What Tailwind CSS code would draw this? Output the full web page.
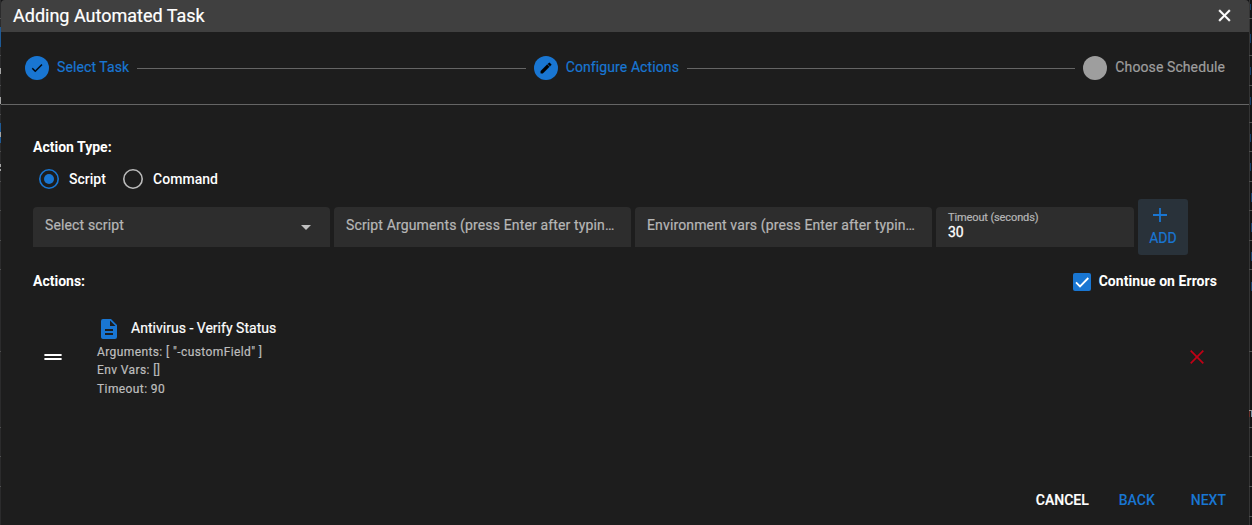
<!DOCTYPE html>
<html lang="en">
<head>
<meta charset="utf-8">
<title>Adding Automated Task</title>
<script src="https://cdn.jsdelivr.net/npm/@tailwindcss/browser@4"></script>
</head>
<body class="relative h-[525px] w-[1252px] overflow-hidden bg-[#141416] font-['Roboto',sans-serif] text-sm text-white">
<!-- page behind the dialog -->
<svg class="absolute inset-0" width="1252" height="525" viewBox="0 0 1252 525" shape-rendering="crispEdges">
<path fill="#2b2b2c" d="M0 0h1v525h-1z"/>
<path fill="#1e5a96" d="M0 27h1v20h-1zM0 123h1v9h-1zM0 137h1v6h-1z"/>
<path fill="#a5a5a5" d="M0 68h1v6h-1zM0 97h1v7h-1zM0 132h1v5h-1zM0 164h1v3h-1zM0 169h1v2h-1z"/>
<path fill="#505050" d="M0 18h1v1h-1zM0 55h1v1h-1zM0 85h1v1h-1zM0 114h1v1h-1zM0 151h1v1h-1zM0 181h1v1h-1zM0 210h1v1h-1zM0 240h1v1h-1zM0 269h1v1h-1zM0 351h1v1h-1zM0 427h1v1h-1zM0 456h1v1h-1zM0 486h1v1h-1z"/>
<path fill="#343434" d="M1249 0h1v525h-1z"/>
<path fill="#505050" d="M1249 18h3v1h-3zM1249 55h3v1h-3zM1249 85h3v1h-3zM1249 122h3v1h-3zM1249 151h3v1h-3zM1249 181h3v1h-3zM1249 210h3v1h-3zM1249 240h3v1h-3zM1249 269h3v1h-3zM1249 351h3v1h-3zM1249 427h3v1h-3zM1249 456h3v1h-3zM1249 486h3v1h-3zM1249 516h3v1h-3z"/>
<path fill="#16406c" d="M1250 4h1v6h-1zM1250 34h1v9h-1zM1250 67h1v8h-1zM1250 97h1v8h-1zM1250 134h1v8h-1zM1250 163h1v8h-1zM1251 193h1v9h-1zM1251 223h1v9h-1zM1251 252h1v9h-1zM1251 282h1v9h-1z"/>
<path fill="#999" d="M1249 410h3v1h-3z"/><path fill="#6b2f28" d="M1249 411h1v6h-1z"/><path fill="#7b93a4" d="M1251 411h1v6h-1z"/>
</svg>
<div class="relative ml-px flex h-full w-[1248px] flex-col rounded-t bg-[#1d1d1d]">
<header class="flex h-8 shrink-0 items-center justify-between rounded-t bg-[#404040] pl-3 pr-[17px] text-lg">
<h1 class="[-webkit-text-stroke:0.2px_#fff]">Adding Automated Task</h1>
<svg class="-mt-px" width="15" height="15" viewBox="5 5 14 14" fill="#fff" stroke="#fff" stroke-width=".3"><path d="M17.5 7.7 16.3 6.5 12 10.8 7.7 6.5 6.5 7.7 10.8 12 6.5 16.3 7.7 17.5 12 13.2 16.3 17.5 17.5 16.3 13.2 12z"/></svg>
</header>
<nav class="flex h-[73px] shrink-0 items-center gap-2 border-b border-[#656565] pl-6 pr-6 text-[#1976d2]">
<div class="flex items-center gap-2"><span class="flex size-6 items-center justify-center rounded-full bg-[#1976d2]"><svg width="14" height="14" viewBox="0 0 24 24" fill="#000" stroke="#000" stroke-width=".6"><path d="M9 16.17 4.83 12l-1.42 1.41L9 19 21 7l-1.41-1.41z"/></svg></span><span class="-mt-0.5 tracking-[0.1px] [-webkit-text-stroke:0.2px_currentColor]">Select Task</span></div>
<i class="h-px flex-1 bg-[#656565]"></i>
<div class="flex items-center gap-2"><span class="flex size-6 items-center justify-center rounded-full bg-[#1976d2]"><svg width="14" height="14" viewBox="0 0 24 24" fill="#000" stroke="#000" stroke-width=".6"><path d="M3 17.25V21h3.75L17.81 9.94l-3.75-3.75zM20.71 7.04a1 1 0 0 0 0-1.41l-2.34-2.34a1 1 0 0 0-1.41 0l-1.83 1.83 3.75 3.75z"/></svg></span><span class="-mt-0.5 tracking-[0.1px] [-webkit-text-stroke:0.2px_currentColor]">Configure Actions</span></div>
<i class="h-px flex-1 bg-[#656565]"></i>
<div class="flex items-center gap-2 text-[#9e9e9e]"><span class="size-6 rounded-full bg-[#9e9e9e]"></span><span class="-mt-0.5 tracking-[0.1px] [-webkit-text-stroke:0.2px_currentColor]">Choose Schedule</span></div>
</nav>
<main class="flex flex-1 flex-col px-8 pt-8">
<p class="h-5 font-bold leading-5">Action Type:</p>
<div class="flex h-[42px] items-center pl-1.5 pt-1">
<svg class="-mt-0.5" width="20" height="20" viewBox="0 0 20 20"><circle cx="10" cy="10" r="9.2" fill="none" stroke="#1976d2" stroke-width="1.6"/><circle cx="10" cy="10" r="5" fill="#1976d2"/></svg>
<span class="-mt-0.5 ml-2.5 w-[54px] font-medium">Script</span>
<svg class="-mt-0.5" width="20" height="20" viewBox="0 0 20 20"><circle cx="10" cy="10" r="9.2" fill="none" stroke="#bbb" stroke-width="1.6"/></svg>
<span class="-mt-0.5 ml-2.5 font-medium tracking-[0.05px]">Command</span>
</div>
<div class="flex h-14 items-center gap-1 text-[#b6b6b6]">
<div class="flex h-10 w-[297px] items-center justify-between rounded-t bg-[#2d2d2d] pl-3 pr-[18px]"><span class="-mt-1 tracking-[0.14px] [-webkit-text-stroke:0.2px_currentColor]">Select script</span><svg width="12" height="6" viewBox="0 0 12 6" fill="#c0c0c0"><path d="M1 1h10L6 6z"/></svg></div>
<div class="flex h-10 w-[297px] items-center rounded-t bg-[#2d2d2d] px-3"><span class="-mt-1 whitespace-nowrap tracking-[0.14px] [-webkit-text-stroke:0.2px_currentColor]">Script Arguments (press Enter after typin…</span></div>
<div class="flex h-10 w-[297px] items-center rounded-t bg-[#2d2d2d] px-3"><span class="-mt-1 whitespace-nowrap tracking-[0.14px] [-webkit-text-stroke:0.2px_currentColor]">Environment vars (press Enter after typin…</span></div>
<div class="flex h-10 w-[198px] flex-col rounded-t bg-[#2d2d2d] px-3 pt-1"><span class="text-[11px] leading-[14px] tracking-[-0.12px] [-webkit-text-stroke:0.2px_currentColor]">Timeout (seconds)</span><span class="leading-[14px] text-white [-webkit-text-stroke:0.3px_currentColor]">30</span></div>
<button class="flex h-14 w-[50px] flex-col items-center rounded-[3px] bg-[#29323a] pt-2 text-[#1976d2]"><svg class="-ml-1.5" width="16" height="16" viewBox="0 0 16 16" fill="#1976d2"><path d="M7.100 1h1.800v6.100H15v1.800H8.900V15H7.100V8.900H1V7.100h6.100z"/></svg><span class="mt-[5px] leading-5 [-webkit-text-stroke:0.2px_currentColor]">ADD</span></button>
</div>
<div class="flex h-[54px] items-center justify-between font-bold"><span class="-mt-0.5">Actions:</span>
<label class="flex items-center gap-2"><svg width="18" height="18" viewBox="0 0 18 18"><rect width="18" height="18" rx="2" fill="#1976d2"/><path d="M3 9.4 7 13.4 15.3 5" fill="none" stroke="#fff" stroke-width="1.8"/></svg><span class="-mt-0.5 tracking-[0.05px]">Continue on Errors</span></label></div>
<section class="flex h-24 items-center">
<svg class="ml-[11px]" width="18" height="8" viewBox="0 0 18 8" fill="#fff"><path d="M.4 1h17.2v2H.4zM.4 5h17.2v2H.4z"/></svg>
<div class="-mt-0.5 ml-[35px] flex-1 text-xs tracking-[0.4px] text-[#bdbdbd] [-webkit-text-stroke:0.2px_currentColor]">
<div class="flex h-6 items-center text-sm tracking-normal text-white"><svg class="mt-0.5" width="24" height="24" viewBox="0 0 24 24" fill="#1976d2"><path d="M14 2H6a2 2 0 0 0-2 2v16c0 1.1.9 2 2 2h12a2 2 0 0 0 2-2V8zm2 16H8v-2h8zm0-4H8v-2h8zm-3-5V3.5L18.500 9z"/></svg><span class="ml-2.5 tracking-[0.02px]">Antivirus - Verify Status</span></div>
<p class="mt-[3px] h-[18px] leading-[18px]">Arguments: [ "-customField" ]</p><p class="h-[19px] leading-[18px]">Env Vars: []</p><p class="h-[17px] leading-[18px]">Timeout: 90</p>
</div>
<svg class="mr-3" width="16" height="16" viewBox="0 0 16 16" fill="none" stroke="#c10015" stroke-width="1.7"><path d="m1.700 1.700 12.600 12.600m0-12.600-12.600 12.600"/></svg>
</section>
</main>
<footer class="flex h-[50px] shrink-0 items-center justify-end pr-[23px] font-medium text-[#1976d2]"><button class="text-white [-webkit-text-stroke:0.2px_currentColor]">CANCEL</button><button class="ml-[30px]">BACK</button><button class="ml-9">NEXT</button></footer>
</div>
</body>
</html>
